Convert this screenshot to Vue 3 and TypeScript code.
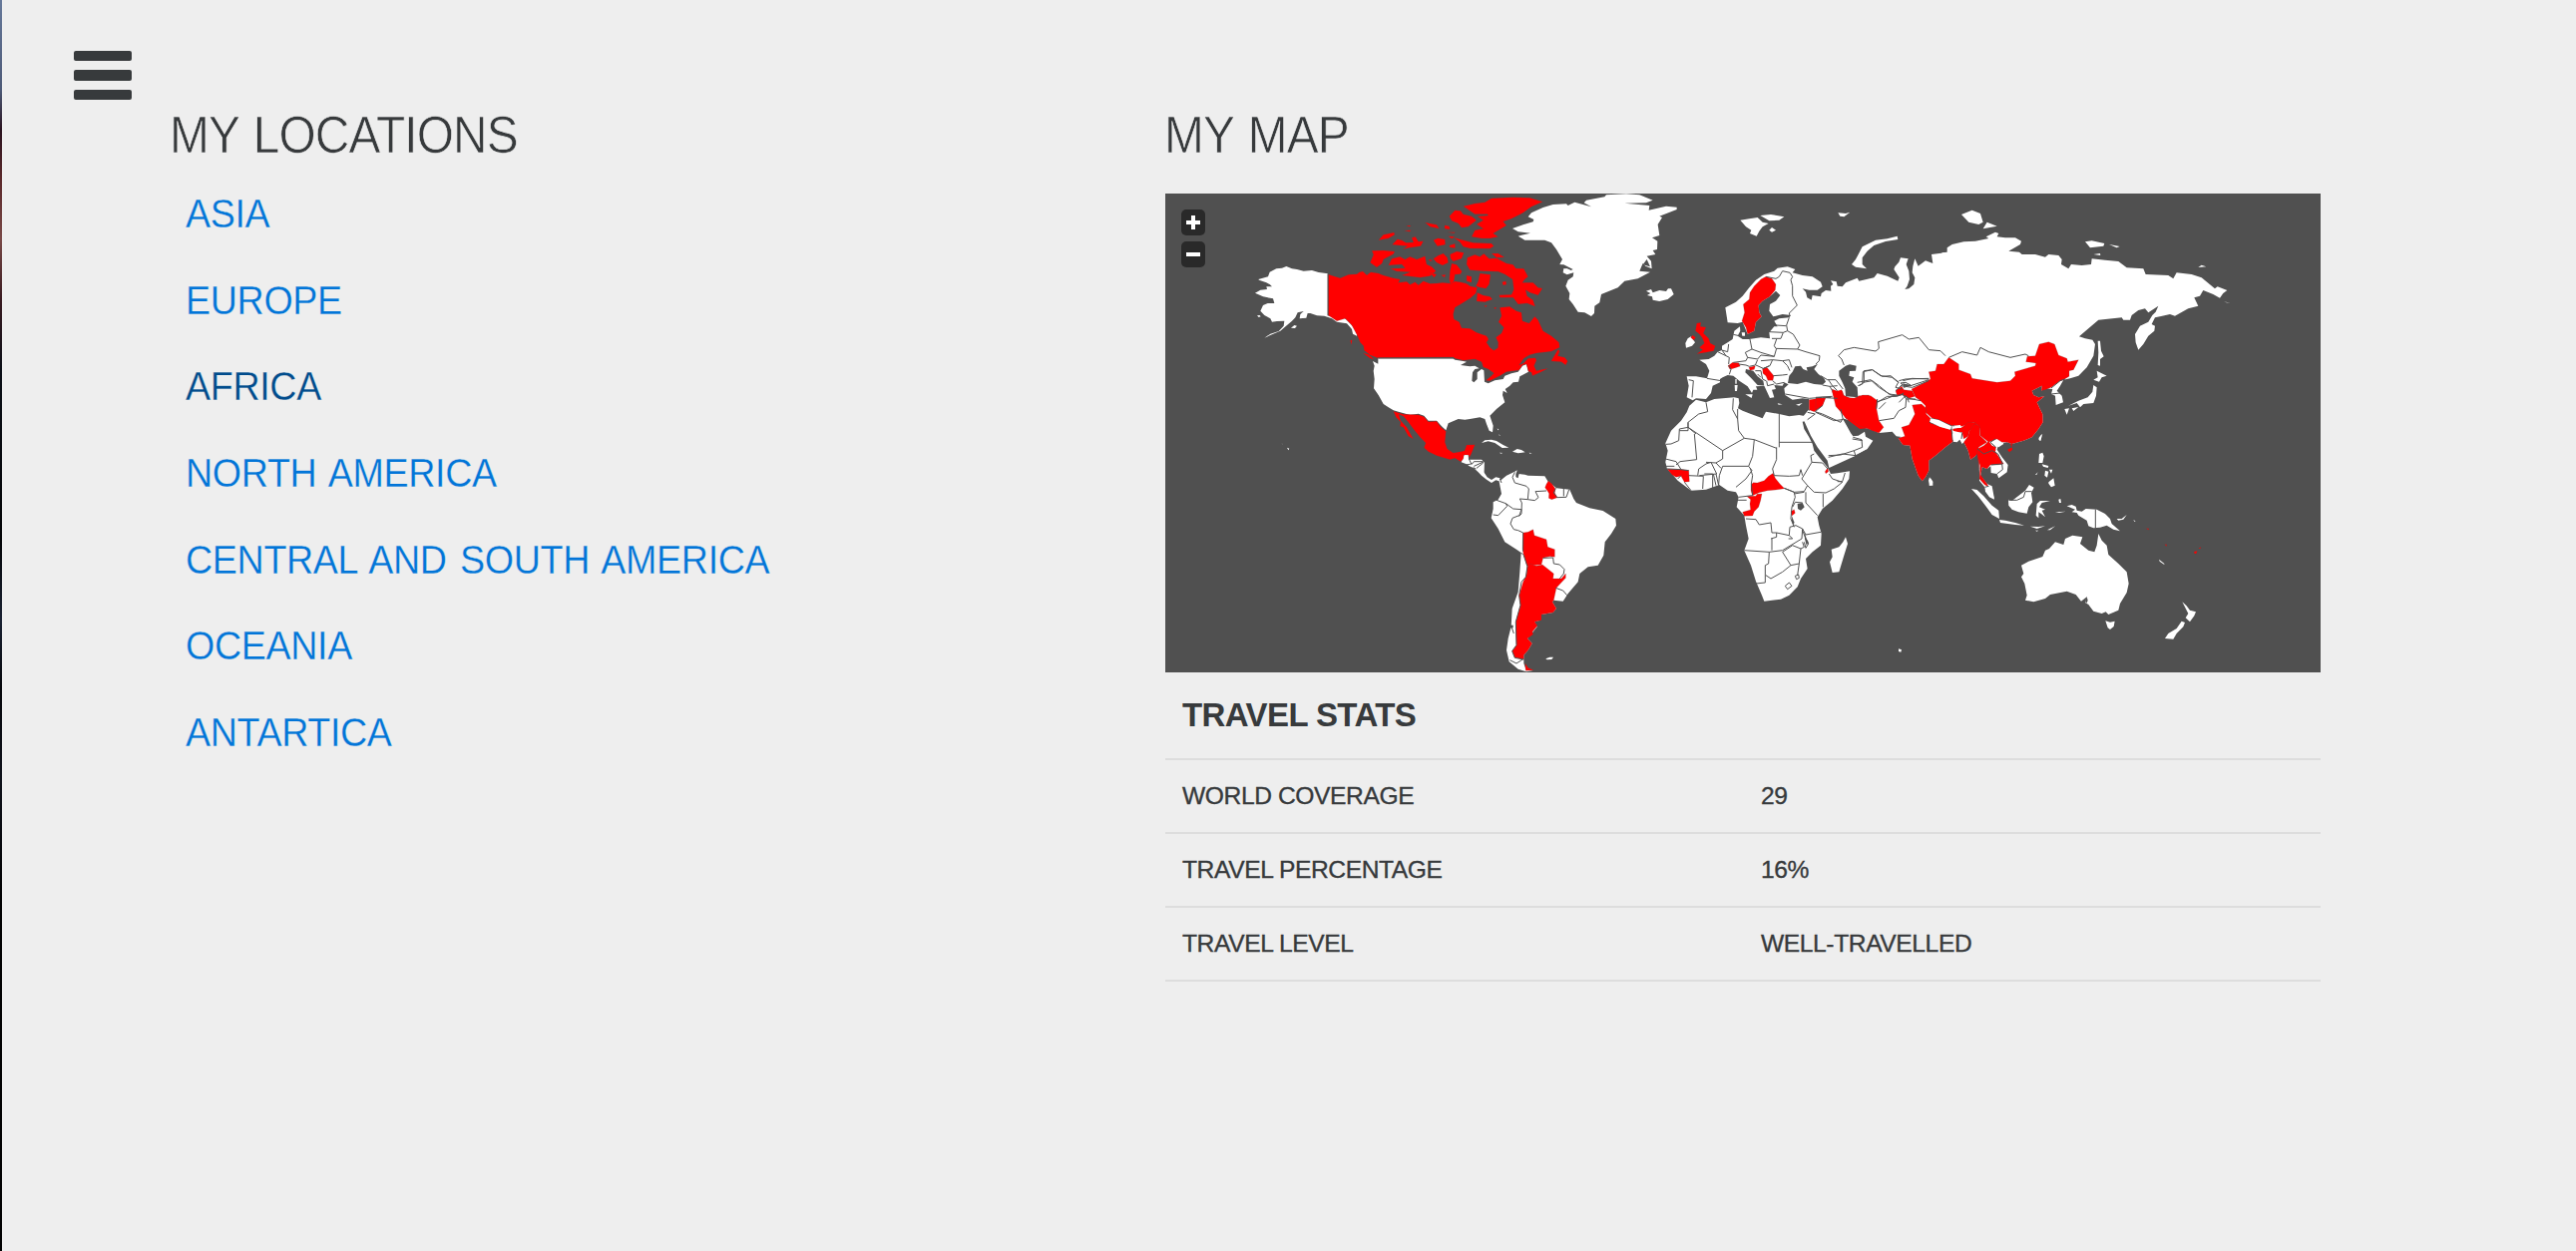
<script setup lang="ts">
interface Region {
  x: number
  y: number
  land: string[]
  visited?: string[]
  borders?: string[]
  water?: string[]
}

const locations = [
  { name: 'Asia', active: false },
  { name: 'Europe', active: false },
  { name: 'Africa', active: true },
  { name: 'North America', active: false },
  { name: 'Central and South America', active: false },
  { name: 'Oceania', active: false },
  { name: 'Antartica', active: false },
]

const stats = [
  { label: 'World coverage', value: '29' },
  { label: 'Travel percentage', value: '16%' },
  { label: 'Travel level', value: 'Well-travelled' },
]

// Region outlines are stored at three times map scale, relative to each region's origin.
const regions: Region[] = [
  {
    // North America
    x: 1240,
    y: 190,
    land: [
      'M64,270 93,262 98,248 118,238 135,236 148,231 165,238 180,240 200,245 225,243 245,249 273,253 273,379 300,388 318,384 330,392 345,408 362,432 360,440 348,434 345,420 330,403 300,398 285,388 262,380 240,379 220,372 212,372 208,386 188,388 190,375 200,366 182,370 175,385 165,395 150,408 130,425 105,436 82,446 100,434 125,426 140,410 142,395 120,396 105,398 100,388 82,378 70,365 78,348 92,342 112,342 108,328 78,322 54,311 70,302 90,300 88,292 105,292 98,285 88,280 66,272Z',
      'M162,416 172,408 180,410 174,417Z M60,379 68,378 71,382 65,384Z M150,776 157,779 154,784Z M134,764 137,765 136,766Z',
      'M424,508 648,508 655,512 680,516 690,518 672,528 700,532 715,530 728,538 715,540 708,550 706,575 712,580 722,570 722,550 735,540 742,544 744,578 755,583 775,574 800,570 805,560 825,553 845,548 858,530 870,525 876,548 850,562 846,578 830,580 820,590 806,600 812,612 800,605 798,618 805,640 780,660 760,680 770,710 768,730 758,725 750,705 745,690 730,685 700,690 685,692 665,690 635,703 628,724 615,712 600,695 575,695 562,680 545,674 520,678 485,668 470,664 455,655 440,645 425,618 411,598 413,570 410,545 413,530 408,516 424,524Z',
      'M683,797 695,797 696,812 735,812 743,822 742,855 728,848 712,832 690,826 674,820 680,805Z',
      'M735,762 745,754 765,752 780,756 800,768 817,776 797,777 775,762 755,757Z M828,788 842,780 855,783 866,790 845,793Z M789,791l10,1 -6,2Z M878,791l9,2 -7,1Z M782,718l5,4 -3,2Z M787,735l4,5 -2,1Z',
    ],
    visited: [
      'M274,255 290,260 310,266 335,256 360,254 368,248 378,246 390,257 402,248 425,252 440,258 470,266 490,270 485,280 510,277 520,286 535,278 545,287 560,275 580,283 600,282 618,280 638,282 655,276 672,278 690,283 700,290 722,295 718,312 700,328 690,334 672,345 655,355 650,375 652,390 668,398 675,416 700,418 720,430 750,440 756,450 750,460 760,475 772,484 784,476 785,460 778,445 795,432 802,415 786,398 795,380 790,355 820,352 840,365 855,370 858,395 878,402 895,382 905,392 920,425 945,440 968,460 970,475 945,487 900,492 880,497 862,508 848,528 862,522 875,508 897,506 900,514 893,530 900,545 912,542 935,538 915,548 888,560 885,550 876,547 870,525 858,528 848,543 810,548 790,560 775,568 760,575 748,574 765,560 772,552 755,540 740,534 735,518 715,510 680,514 655,508 650,504 422,506 400,498 382,484 380,470 370,460 362,440 345,408 325,388 300,395 274,378Z',
      'M944,516 965,481 970,486 964,500 985,505 994,516 988,528 975,518Z M378,491 395,496 412,510 400,508Z M340,454 346,452 344,467Z',
      'M680,50 715,42 745,38 765,26 830,23 880,25 919,37 885,52 860,70 825,88 800,96 810,108 790,120 770,132 785,142 760,147 735,147 705,142 715,122 740,118 720,104 740,92 722,80 755,78 752,74 715,74Z',
      'M638,80 655,62 672,64 680,74 705,80 720,92 695,112 675,115 665,102 645,94Z',
      'M652,145 680,152 710,160 765,162 772,170 760,178 700,177 680,172 670,158Z M635,140 655,142 645,148Z M632,128l24,0 -4,3Z',
      'M425,152 440,136 472,129 474,136 455,147Z M565,99 600,106 608,118 580,112Z M624,107 638,110 640,120 624,118Z M508,108l15,0 -5,4Z M502,123l22,-1 -6,5Z',
      'M466,166 482,149 495,152 508,160 530,159 525,145 536,142 545,156 560,155 552,170 520,175 498,179 512,170Z M590,152 604,146 625,150 626,166 602,170Z M638,168 655,163 656,176 640,174Z',
      'M400,220 410,196 405,184 440,183 474,186 470,194 440,210 436,222 420,234Z',
      'M455,228 465,208 490,202 505,210 520,202 540,210 565,200 570,225 585,232 598,245 580,260 550,265 525,262 495,258 520,248 480,246 460,238 505,236 495,225Z',
      'M590,208 605,198 620,192 632,205 635,220 618,228 600,220Z M640,195 660,186 682,190 675,208 650,216 642,208Z M580,250 600,255 592,265Z M613,257 627,256 624,264Z M575,210l14,2 -8,4Z',
      'M645,222 660,226 676,246 672,254 655,256 652,275 642,286 638,270 640,245Z',
      'M692,205 715,196 730,202 742,193 758,208 780,206 810,222 830,226 838,237 862,238 875,262 865,270 858,280 890,280 905,295 918,297 905,318 880,310 868,302 872,320 890,332 896,352 872,342 845,345 830,325 790,325 788,317 825,316 832,300 828,270 805,255 785,247 740,245 700,242 690,225Z',
      'M730,252 762,256 760,272 758,285 748,298 728,294 718,290 725,275Z M797,278 808,275 810,286 800,288Z M722,310 740,318 760,322 768,330 745,338 720,336Z M742,350l10,-2 -4,5Z M772,355l8,0 -4,5Z M765,192 785,192 804,204 780,205Z M690,258 705,262 705,280 690,275Z',
      'M470,667 500,676 545,677 562,683 575,698 600,697 612,714 628,727 625,760 632,780 650,792 672,788 684,785 690,768 715,767 708,785 704,795 698,806 696,798 682,798 680,810 672,818 655,808 640,812 600,800 575,788 562,776 567,762 550,745 530,720 515,700 500,682 486,676 492,695 510,715 530,750 515,742 500,715 490,712 492,700 478,685Z',
    ],
    borders: ['M273,253V379', 'M424,507H650', 'M697,810 705,826', 'M712,832 743,818', 'M720,838 740,822'],
  },
  {
    // Greenland and Iceland
    x: 1480,
    y: 190,
    land: [
      'M108,117 140,106 170,97 172,90 155,82 165,70 200,54 230,45 270,43 275,48 295,38 345,52 323,40 330,32 385,22 390,16 450,13 490,16 530,32 510,40 445,41 520,48 518,62 570,50 602,53 602,60 550,80 558,84 545,105 550,138 528,145 544,155 543,180 530,183 538,195 512,200 525,215 527,238 508,230 500,222 490,245 522,248 485,268 445,275 425,295 375,315 370,340 355,350 354,372 345,381 325,370 305,368 290,345 278,330 280,312 268,290 275,272 290,262 292,250 272,256 260,250 262,237 280,238 250,225 258,210 240,180 225,160 205,152 145,152 125,140 162,131 125,127Z',
      'M510,305 525,300 530,310 550,303 570,306 576,298 585,298 593,315 575,330 550,336 530,332 528,322 513,318 523,312Z',
    ],
    water: ['M250,226 262,226 290,240 284,243 272,237 262,238 256,232Z', 'M500,226l22,6 -10,-22Z'],
  },
  {
    // South America
    x: 1470,
    y: 460,
    land: [
      'M5,5 45,3 53,10 52,40 62,55 75,63 88,55 100,58 104,70 95,66 88,64 75,72 60,62 45,50 35,40 22,28 5,20Z',
      'M98,68 120,50 145,38 152,34 148,48 154,58 158,45 175,47 185,50 235,52 245,68 255,75 270,88 310,92 322,120 330,132 370,148 410,156 448,180 450,200 435,225 416,250 412,290 395,320 365,325 340,345 335,370 305,405 290,428 262,425 258,430 270,450 260,462 225,468 222,485 205,490 212,505 200,520 183,540 197,555 185,575 172,590 172,602 172,615 178,632 200,636 180,640 155,632 128,610 120,575 125,540 134,505 137,450 155,400 160,340 164,282 150,272 115,250 95,210 74,178 80,150 80,130 95,122 105,105Z',
      'M238,601 250,596 261,596 256,603 242,604Z',
    ],
    visited: [
      'M236,86 240,76 246,66 257,75 267,90 265,102 273,116 256,122 247,118 248,104 243,96Z',
      'M170,222 185,220 200,212 204,230 240,242 244,265 265,272 265,295 250,293 230,298 225,318 190,321 182,322 172,290 168,270Z',
      'M182,325 190,315 210,322 228,318 262,345 260,360 285,360 298,345 298,358 270,388 262,425 258,430 270,450 260,462 225,468 225,485 205,490 213,502 198,520 200,528 183,540 197,555 185,575 172,590 172,603 145,598 137,578 150,560 148,490 162,440 158,410 170,370 180,350Z',
      'M176,614 185,628 202,635 178,637Z',
    ],
    borders: [
      'M145,40 138,55 145,72 180,82 187,90 184,122 160,120 166,132 165,165 158,172 165,152 140,150 118,134 90,124',
      'M118,134 122,142 95,170 80,168',
      'M158,170 138,178 132,195 142,212 155,215 170,222',
      'M184,122 205,125 216,116 207,98 240,96',
      'M268,88 262,102 272,116 300,115 308,92 M292,90V112',
      'M164,282 172,290 183,324 178,355 165,370 158,410 162,440 148,490 150,560 137,578 145,598 172,603',
      'M170,222 170,278',
      'M230,298 260,297 262,315 280,318 294,332 292,345 280,360 M268,388 290,396 302,410',
      'M135,505 142,525 M130,605 150,615 170,602',
      'M0,18 18,14 22,8 50,8 M20,26 28,30 M100,60 105,72',
    ],
    water: ['M150,40 156,45 154,58 148,54Z', 'M130,500h10v8h-10Z'],
  },
  {
    // Europe
    x: 1650,
    y: 190,
    land: [
      'M238,355 270,338 290,320 310,295 330,272 355,255 385,245 395,236 425,232 448,240 440,250 470,258 500,262 525,278 530,292 515,302 490,302 470,298 480,308 484,325 497,332 500,318 525,322 527,312 540,303 556,305 555,290 562,285 555,274 572,277 575,290 590,292 600,280 635,266 640,275 685,265 695,252 725,260 757,275 761,265 745,240 748,232 760,218 765,205 788,208 782,225 790,245 792,270 785,290 778,300 790,298 805,285 808,265 800,250 802,230 808,208 818,230 840,214 862,222 858,195 900,190 900,660 490,660 500,640 490,630 470,628 440,632 418,618 415,598 428,586 415,580 410,590 385,588 390,600 378,602 385,625 372,627 362,605 355,590 352,575 335,562 322,545 300,540 298,550 315,566 335,588 358,590 330,592 334,602 322,602 318,612 305,592 280,575 262,560 245,558 230,565 222,570 222,580 200,590 195,612 180,630 150,628 140,634 122,625 128,590 122,562 150,562 183,568 190,545 180,525 160,512 188,510 205,500 215,488 228,483 228,470 245,460 260,450 265,425 282,412 283,425 275,440 290,450 310,450 345,445 372,448 370,430 385,412 395,412 385,395 400,388 430,385 435,378 410,375 382,382 370,365 372,345 390,335 403,318 390,305 372,322 350,335 338,348 340,370 347,382 330,398 325,425 305,435 290,398 275,402 245,400Z',
      'M118,462 125,448 135,442 147,460 138,470 120,476Z',
      'M283,92 310,88 335,84 350,98 368,102 350,112 340,125 332,140 312,132 316,122 300,112Z M343,78 375,75 415,82 400,92 370,94Z M370,122 378,114 390,122 378,128Z',
      'M755,140 757,150 720,156 685,168 665,185 650,205 650,225 663,238 630,233 618,225 630,210 638,195 650,172 690,152 725,148Z M577,70 600,72 613,68 595,82 583,80Z',
      'M287,430h10v10h-8Z M268,570h4v14h-4Z M266,588h9l-2,18h-6Z M298,616h22l-3,11Z M395,643l15,3 -12,1Z M450,647l20,-5 -10,8Z',
    ],
    visited: [
      'M360,262 378,268 390,285 388,302 372,322 350,335 338,348 340,370 347,382 330,398 325,425 305,435 300,415 288,395 296,370 292,345 310,330 312,310 325,290 345,270Z',
      'M152,402 165,400 163,412 180,414 172,432 188,448 193,462 208,470 203,485 180,490 152,494 170,482 160,475 175,462 168,445 160,435 148,425Z M134,445 140,438 149,445 143,453Z',
      'M246,530 260,520 278,521 283,531 268,536 252,541Z M309,535 328,530 325,541 312,544Z M350,538 363,535 374,548 384,560 381,574 366,574 360,560 351,553Z',
    ],
    borders: [
      'M360,262 390,268 400,262 410,245 432,250 440,262 435,272 440,290 440,320 454,348 430,372 432,380',
      'M430,385 422,408 425,425 412,430 370,428 M390,408 420,410 M412,430 405,448 378,448 M425,425 442,435 462,468 455,480 390,478 385,470 392,450',
      'M312,450 318,480 345,490 385,502 392,478 M318,480 298,490 305,505 335,510 345,498 385,502 M455,480 480,488 522,500 520,515 510,525',
      'M228,483 240,500 250,505 248,525 M240,500 215,488 M228,483 245,488 248,465 M248,528 255,541 250,556 M262,520 300,515 305,505 M278,525 300,528 310,532 328,528 335,512',
      'M345,515 380,512 372,530 352,538 330,528',
      'M380,512 410,515 425,530 432,545 M410,515 430,512 438,535 M382,560 410,558 425,556 M380,575 392,585 415,580 M328,545 345,545 350,570 360,575 M335,555 345,565 M362,575 365,590 385,585 M370,530 350,540',
      'M183,568 225,575 M128,572 142,575 138,625 M262,436 280,440',
      'M595,528 588,510 578,500 595,482 625,475 690,486 700,478 698,458 770,437 790,450 820,445 850,482 885,485 900,500',
      'M525,560 545,572 570,572 592,600 M530,588 552,592 560,605 M548,572 560,590 575,605 M552,592 575,590',
      'M637,590 650,585 652,548 680,542 705,560 740,565 758,580 750,595 770,600 M652,580 680,575 700,590 730,615 755,618 M695,640 725,622 755,622 775,612 M760,575 780,570 850,568 M765,590 800,595 850,575 M780,580 795,588 775,590 765,582Z',
      'M695,630 692,660 M700,660 720,640 M760,640 780,620 785,625 790,640 M418,615 490,628 530,625 555,625',
    ],
    water: [
      'M426,582 430,560 440,548 448,532 465,530 472,540 485,545 482,535 500,532 516,524 505,540 518,555 535,568 540,578 530,587 505,585 480,578 455,585Z',
      'M580,545 600,530 612,526 632,530 630,545 612,546 610,560 625,565 620,578 635,595 637,625 600,622 598,598 590,580 580,560Z',
    ],
  },
  {
    // Africa
    x: 1660,
    y: 380,
    land: [
      'M120,62 150,70 175,60 235,55 248,58 250,72 246,88 260,95 285,105 320,118 330,98 370,105 400,112 430,108 450,112 452,125 440,128 445,150 460,175 470,195 475,215 490,235 515,265 525,285 545,283 582,277 580,300 560,330 530,365 500,390 485,415 490,440 497,465 495,500 470,520 450,540 455,570 435,600 425,625 400,650 375,662 325,668 318,650 300,608 285,560 265,515 278,480 270,440 265,410 242,385 248,355 240,340 215,335 190,318 150,332 105,335 85,320 65,305 50,288 33,270 28,250 35,215 28,193 45,155 75,125 92,100 100,80Z',
      'M570,475 576,495 565,530 550,580 530,582 522,550 530,535 527,512 550,505 562,490Z',
    ],
    visited: [
      'M33,270 75,272 98,274 100,308 85,310 75,292 60,295 48,288Z',
      'M285,318 292,311 304,312 325,305 338,292 352,283 358,298 372,315 386,329 360,333 335,335 310,341 290,350 285,335Z',
      'M272,352 300,352 303,346 318,345 314,365 308,385 295,398 290,411 265,412 260,400 284,393 282,375 284,362Z',
      'M460,62 490,58 510,56 500,80 475,98 460,92Z M528,34 545,40 560,36 565,50 590,60 610,50 640,48 640,148 612,150 585,130 570,118 560,90 540,70Z M508,278 516,266 518,278 510,284Z M405,398 415,392 418,403 408,411Z',
    ],
    borders: [
      'M150,70 155,98 128,105 96,130 96,145 70,150 68,185 45,195 30,196 M96,145 200,215 265,178 248,155 245,120 230,92 232,58 M245,90 245,120 M96,130V155H70',
      'M115,165 122,242 72,248 60,258 M96,145 120,165 M200,215 200,240 180,252 150,250 M265,178 295,182 290,232 278,262 M295,182 362,208 M370,105V205 M362,205V242 L350,270 355,290 M370,190H470',
      'M278,262 200,262 190,290 188,318 M180,252 195,268 M125,290 128,270 150,255 165,250 182,285 130,290 M98,290 142,292 140,330 M145,285 170,285V328 M172,285 180,320 M180,285 188,320',
      'M28,240 60,248 75,272 M30,262h25 M33,270 75,272 98,275 M85,310 105,335 M65,300 75,290',
      'M278,262 288,275 270,300 240,325 M283,268 290,290 286,315 M286,315 290,350 248,355 M355,290 400,292 430,290 435,272 440,290 M362,305 M385,328 415,340 445,338 455,320 438,300 468,250 465,230 475,225 M468,250 500,252 516,270 M455,320 475,340 510,342 535,330 560,310 530,300 520,285 M502,345V385 M545,308 560,308 568,282',
      'M385,328 415,340 418,355 408,385 405,420 415,445 M450,340 450,372 485,410 M415,345 445,340 M410,385 418,370 440,372 M270,420 300,422 310,438 345,432 348,462 362,462 400,470 410,480 398,480 M265,515 340,520 380,515 M348,480V515 M362,462V475L345,480 M400,470 402,445 420,440 440,450 438,480 380,515 M440,450 450,468 495,460 M440,455 450,480 458,495 450,508 445,490',
      'M340,520 338,555 328,560 328,612 300,615 M330,590 345,600 380,580 405,560 380,520 M380,520 410,500 435,510 430,555 405,560 M430,555 425,590 M388,622 400,612 408,622 395,632Z M418,592l10,-4 2,10 -8,4Z M435,510 445,505 440,490',
      'M455,100 478,105 455,122 M478,98 500,105 555,130 560,120 M500,80 478,98 M510,56 545,58 M455,80 460,95',
      'M518,235 560,225 600,230 630,215 M590,180 620,185 M245,364H272',
    ],
    water: ['M425,375 440,372 446,385 435,395 426,390Z', 'M408,412 415,430 414,440 408,428Z', 'M446,460 452,480 458,490 452,500 447,480Z'],
  },
  {
    // Asia
    x: 1820,
    y: 210,
    land: [
      'M380,130 395,128 395,115 410,105 445,97 480,95 520,87 512,82 540,68 550,72 545,82 570,85 600,85 618,95 615,105 580,125 612,128 620,135 660,135 690,143 700,135 730,138 740,150 738,165 760,178 768,165 800,168 828,165 830,148 870,152 910,156 935,175 985,178 992,195 1060,198 1075,208 1085,190 1130,195 1160,205 1200,238 1208,232 1237,243 1225,252 1215,266 1195,255 1165,243 1155,260 1138,265 1150,290 1120,298 1080,320 1065,315 1035,322 1020,325 1010,345 1020,350 1018,365 1000,380 985,405 970,422 962,400 960,375 975,350 1000,338 1012,318 1022,308 1030,290 1000,310 990,298 970,303 950,318 945,332 925,332 920,325 850,332 820,358 792,382 810,388 832,392 840,405 835,440 815,475 790,500 765,508 745,512 735,530 725,545 740,560 744,580 722,588 720,560 708,555 712,540 690,538 678,545 680,530 650,545 655,558 670,565 688,562 665,580 672,595 682,615 683,640 670,660 650,685 625,695 590,705 575,700 560,703 548,712 545,722 560,745 578,768 575,790 550,808 545,795 527,792 526,772 515,780 500,775 496,800 515,825 530,832 537,870 522,860 508,835 492,815 492,790 490,750 485,730 480,742 465,752 458,725 445,700 440,705 432,690 425,700 412,698 390,715 360,740 340,755 340,785 330,805 320,817 308,800 290,750 283,710 262,708 248,688 258,684 242,682 230,668 190,672 170,662 150,658 130,652 105,635 80,628 90,645 105,672 112,682 128,680 147,668 150,683 172,695 155,720 120,740 40,777 35,755 5,715 -15,680 -40,625 -20,600 -20,560 100,300 320,240Z',
      'M438,15 470,2 495,12 503,38 490,45 460,38Z M503,58 515,38 545,50Z M810,97 830,94 868,102 865,110 825,115Z M882,105 914,111 905,115Z M835,135 855,132 856,138Z M1150,174 1160,167 1174,172Z M1228,277 1247,282 1235,280Z',
      'M848,395 855,395 858,425 866,442 855,450 855,470 848,468 850,430Z M845,485 875,500 860,505 852,518 835,512 848,505Z M835,528 845,535 843,560 835,582 805,585 795,595 785,582 760,590 790,575 818,565 832,548Z M748,600 762,598 755,617Z M770,598 790,594 775,606Z M670,692 682,674 676,696Z',
      'M345,808 352,818 350,828 341,830Z',
    ],
    visited: [
      'M288,540 328,520 345,510 340,488 360,485 365,465 385,465 400,445 430,465 430,482 465,495 470,508 545,520 585,515 600,500 598,488 660,470 662,462 632,458 636,442 660,440 672,405 700,398 718,405 730,438 755,448 758,458 790,452 775,482 762,485 762,502 745,512 735,515 708,535 690,542 678,545 680,530 650,545 655,558 670,565 688,562 665,580 672,595 682,615 683,640 670,660 650,685 625,695 590,705 575,700 560,700 545,690 520,700 495,680 492,655 475,640 440,652 405,650 350,628 330,610 330,590 315,575 300,565Z',
      'M48,540 65,546 78,542 82,558 100,566 130,568 140,558 165,560 186,575 183,600 190,635 204,655 190,672 170,665 150,656 130,650 105,632 90,628 72,605 60,592Z',
      'M240,545 258,532 265,542 290,545 298,562 280,568 262,558 245,560Z',
      'M290,588 318,585 332,598 332,615 345,628 342,640 370,652 408,662 412,698 390,715 360,740 340,755 340,785 330,805 320,817 308,800 290,750 283,710 262,708 248,688 268,682 258,655 280,648 298,615Z',
      'M412,660 440,655 458,640 480,640 485,650 462,665 458,682 445,690 440,670 415,672Z',
      'M462,665 478,645 492,650 494,680 515,700 490,715 492,780 485,735 480,742 465,752 458,725 445,700 458,682Z',
      'M486,720 505,710 520,697 530,710 542,715 540,728 565,765 545,768 525,768 515,780 500,775 496,798 515,825 520,834 508,828 492,810 494,770 485,735Z M576,722 590,715 592,722 582,730Z M0,566 28,568 20,590 0,602Z M585,704l6,0 -2,12Z',
    ],
    borders: [
      'M400,445 440,428 485,438 495,415 520,428 585,445 630,435 640,440',
      'M130,530 145,520 145,485 170,482 200,502 225,500 250,520 M262,515 290,508 340,510 M240,545 262,525 285,530 340,512 M265,525 280,530 265,535Z M125,520 165,512 190,535 230,560 240,560',
      'M185,578 210,570 230,562 262,556 272,570 300,570 M190,635 235,628 250,605 270,595 272,570 M262,558 280,568 315,575',
      'M345,628 408,650 408,662 342,640 M412,650 438,655 M412,672 440,672 438,690 M408,660 412,698',
      'M486,720 505,735 530,725 548,735 562,765 M540,690 525,700 542,715 M527,768 560,765 562,782 545,795',
      'M0,610 55,635 80,632 M38,740 75,738 115,725 140,715 138,692 112,685 M115,725 120,742 M708,555 735,552 M708,537 735,515 750,510 M75,600 82,632 M0,565 50,562',
      'M508,835 520,832',
    ],
  },
  {
    // Nepal, Bhutan, Bangladesh and South-East Asia islands
    x: 1850,
    y: 340,
    land: [
      'M255,238 280,243 318,262 314,272 285,264 255,250Z M325,260 345,258 348,267 328,267Z M322,275 350,282 340,290 350,305 345,300 335,308 323,303Z',
      'M432,304 470,300 475,315 460,325 452,320 445,310Z M252,415 262,430 262,440 252,440 249,425Z',
      'M378,450 395,453 415,472 440,500 460,515 462,540 440,528 420,500 398,472Z M462,543 480,545 510,552 537,560 510,558 465,552Z M418,442 437,445 447,482 432,475 420,458Z',
      'M489,482 500,486 540,455 552,438 566,446 558,462 562,490 550,505 545,524 520,520 500,512 490,500Z',
      'M575,495 585,486 615,486 590,492 582,505 600,512 590,515 600,535 588,525 580,520 580,538 572,530Z M582,345 592,341 596,352 592,372 580,372Z M580,298 590,284 585,306Z',
      'M590,376l20,5 -2,6 -14,-4Z M600,395l10,3 -4,18 -8,-6Z M612,392l10,0 -4,12Z M610,430 625,418 629,440 618,445 610,434Z M570,408l8,-8 -4,8Z M640,482l6,-2 2,12 -6,0Z',
      'M665,502 680,498 692,503 695,515 710,518 722,510 755,512 780,525 795,540 800,555 825,577 805,572 785,560 765,566 745,568 730,562 725,545 700,530 695,522 680,520 690,512Z',
      'M815,540 830,540 845,528 835,542 820,545Z M865,542l7,6 -4,0Z M630,520l32,-2 -20,4Z M555,563 580,564 600,562 575,570Z M606,574 630,562 615,574Z M570,575l10,0 -5,3Z',
    ],
    borders: ['M490,484 515,484 535,475 540,458 560,458', 'M751,512V568', 'M255,238 280,243 318,262'],
  },
  {
    // Oceania
    x: 1960,
    y: 470,
    land: [
      'M198,290 220,278 262,264 270,245 282,240 300,220 325,228 330,210 352,200 382,205 375,225 400,245 418,250 425,230 430,195 440,215 455,230 460,258 490,285 515,310 521,345 515,372 495,405 490,425 460,438 452,430 440,435 415,428 400,408 390,402 395,385 378,398 362,378 335,368 285,378 270,390 235,400 210,395 215,380 208,345 198,325 205,315Z',
      'M451,457 465,461 479,458 476,474 465,483 458,478Z',
      'M682,400 695,412 705,425 723,430 718,442 705,460 692,448 700,435Z M680,458 690,462 685,475 665,495 655,512 630,510 640,495 665,480Z',
      'M612,272 628,285 628,288 614,278Z',
    ],
    visited: ['M717,249l10,-2 -3,8 -5,0Z M731,240l6,-5 0,5Z M629,227l6,0 0,6Z M573,179l8,0 0,5Z'],
    water: ['M390,398l5,-14 3,12 -4,8Z'],
  },
  {
    // Kerguelen
    x: 1900,
    y: 645,
    land: ['M9,16 18,19 16,26 9,24Z'],
  },
]

const place = (r: Region): string => `translate(${r.x} ${r.y}) scale(0.33333)`

// Small states enclosed by visited countries sit above the red fill.
const enclaves = regions[6]
</script>

<template>
  <div class="page">
    <div class="edge"></div>
    <button class="menu" aria-label="Menu"><span></span><span></span><span></span></button>
    <main class="columns">
      <section class="locations">
        <h1>My Locations</h1>
        <ul>
          <li v-for="loc in locations" :key="loc.name">
            <a :class="{ active: loc.active }">{{ loc.name }}</a>
          </li>
        </ul>
      </section>
      <section class="travel">
        <h1>My Map</h1>
        <div class="map">
          <svg viewBox="1168 194 1158 480" width="1158" height="480">
            <g v-for="(r, i) in regions" :key="'l' + i" :transform="place(r)" class="land">
              <path v-for="(d, j) in r.land" :key="j" :d="d" />
            </g>
            <g v-for="(r, i) in regions" :key="'v' + i" :transform="place(r)" class="visited">
              <path v-for="(d, j) in r.visited" :key="j" :d="d" />
            </g>
            <g v-for="(r, i) in regions" :key="'b' + i" :transform="place(r)">
              <path v-for="(d, j) in r.borders" :key="j" :d="d" class="border" />
              <path v-for="(d, j) in r.water" :key="'w' + j" :d="d" class="water" />
            </g>
            <g :transform="place(enclaves)" class="land">
              <path :d="enclaves.land[0]" />
            </g>
          </svg>
          <div class="zoom">
            <button class="plus" aria-label="Zoom in"></button>
            <button aria-label="Zoom out"></button>
          </div>
        </div>
        <table>
          <thead>
            <tr><th colspan="2">Travel Stats</th></tr>
          </thead>
          <tbody>
            <tr v-for="s in stats" :key="s.label">
              <td>{{ s.label }}</td>
              <td>{{ s.value }}</td>
            </tr>
          </tbody>
        </table>
      </section>
    </main>
  </div>
</template>

<style>
body {
  margin: 0;
  background: #eee;
}
</style>

<style scoped>
.page {
  position: relative;
  box-sizing: border-box;
  width: 2582px;
  height: 1254px;
  padding-top: 51px;
  overflow: hidden;
  background: #eee;
  color: #373a3c;
  font-family: "Liberation Sans", Arial, sans-serif;
  text-transform: uppercase;
}
.edge {
  position: absolute;
  inset: 0 auto 0 0;
  width: 2px;
  background: linear-gradient(#66799a 0, #4d5a78 90px, #2a1420 130px, #5c2a2c 180px, #7a4a48 240px, #3a1c22 300px, #0c1018 370px, #050608 540px, #1a2233 620px, #07080c 690px, #10131c 780px, #020203 900px);
}
.menu {
  display: flex;
  flex-direction: column;
  gap: 9px;
  width: 58px;
  height: 49px;
  margin: 0 0 0 74px;
  padding: 0;
  border: 0;
  background: none;
}
.menu span {
  width: 58px;
  height: 10.4px;
  flex: none;
  border-radius: 2px;
  background: #373a3c;
}
.columns {
  display: grid;
  grid-template-columns: 1000px 1158px;
  padding: 7px 0 0 168px;
}
h1 {
  margin: 0 0 0 2px;
  font-size: 51.5px;
  font-weight: 400;
  line-height: 56px;
  letter-spacing: -1px;
  word-spacing: 2.5px;
  transform: scaleX(0.93);
  transform-origin: left;
  -webkit-text-stroke: 0.7px #eee;
}
.travel h1 {
  margin-left: -1.5px;
}
ul {
  margin: 8px 0 0;
  padding: 0 0 0 18px;
  list-style: none;
}
li {
  height: 86.67px;
  line-height: 86.67px;
  font-size: 40.5px;
  letter-spacing: -0.4px;
  word-spacing: 3.6px;
  transform: scaleX(0.93);
  transform-origin: left;
}
a {
  color: #0275d8;
  -webkit-text-stroke: 0.3px #eee;
}
a.active {
  color: #014c8c;
}
.map {
  position: relative;
  height: 480px;
  margin-top: 31px;
  background: #505050;
}
.map svg {
  display: block;
}
.land {
  fill: #fff;
}
.visited {
  fill: #f00;
  stroke: #505050;
  stroke-width: 0.6;
}
.border {
  fill: none;
  stroke: #505050;
  stroke-width: 3;
}
.water {
  fill: #505050;
}
.zoom {
  position: absolute;
  top: 16px;
  left: 16px;
  display: flex;
  flex-direction: column;
  gap: 6px;
}
.zoom button {
  display: grid;
  place-items: center;
  width: 24px;
  height: 26px;
  padding: 0;
  border: 0;
  border-radius: 5px;
  background: #292929;
}
.zoom button::before,
.zoom .plus::after {
  content: "";
  grid-area: 1 / 1;
  width: 14px;
  height: 3.5px;
  background: #fff;
}
.zoom .plus::after {
  width: 3.5px;
  height: 14px;
}
table {
  width: 100%;
  table-layout: fixed;
  border-collapse: separate;
  border-spacing: 0;
}
th,
td {
  padding: 0 0 0 17px;
  border-bottom: 2px solid #ddd;
  text-align: left;
}
td + td {
  padding-left: 18px;
}
th {
  height: 86px;
  line-height: 86px;
  font-size: 33px;
  letter-spacing: -0.6px;
}
td {
  height: 72px;
  line-height: 72px;
  font-size: 24.6px;
  letter-spacing: -0.4px;
  -webkit-text-stroke: 0.35px currentColor;
}
</style>
